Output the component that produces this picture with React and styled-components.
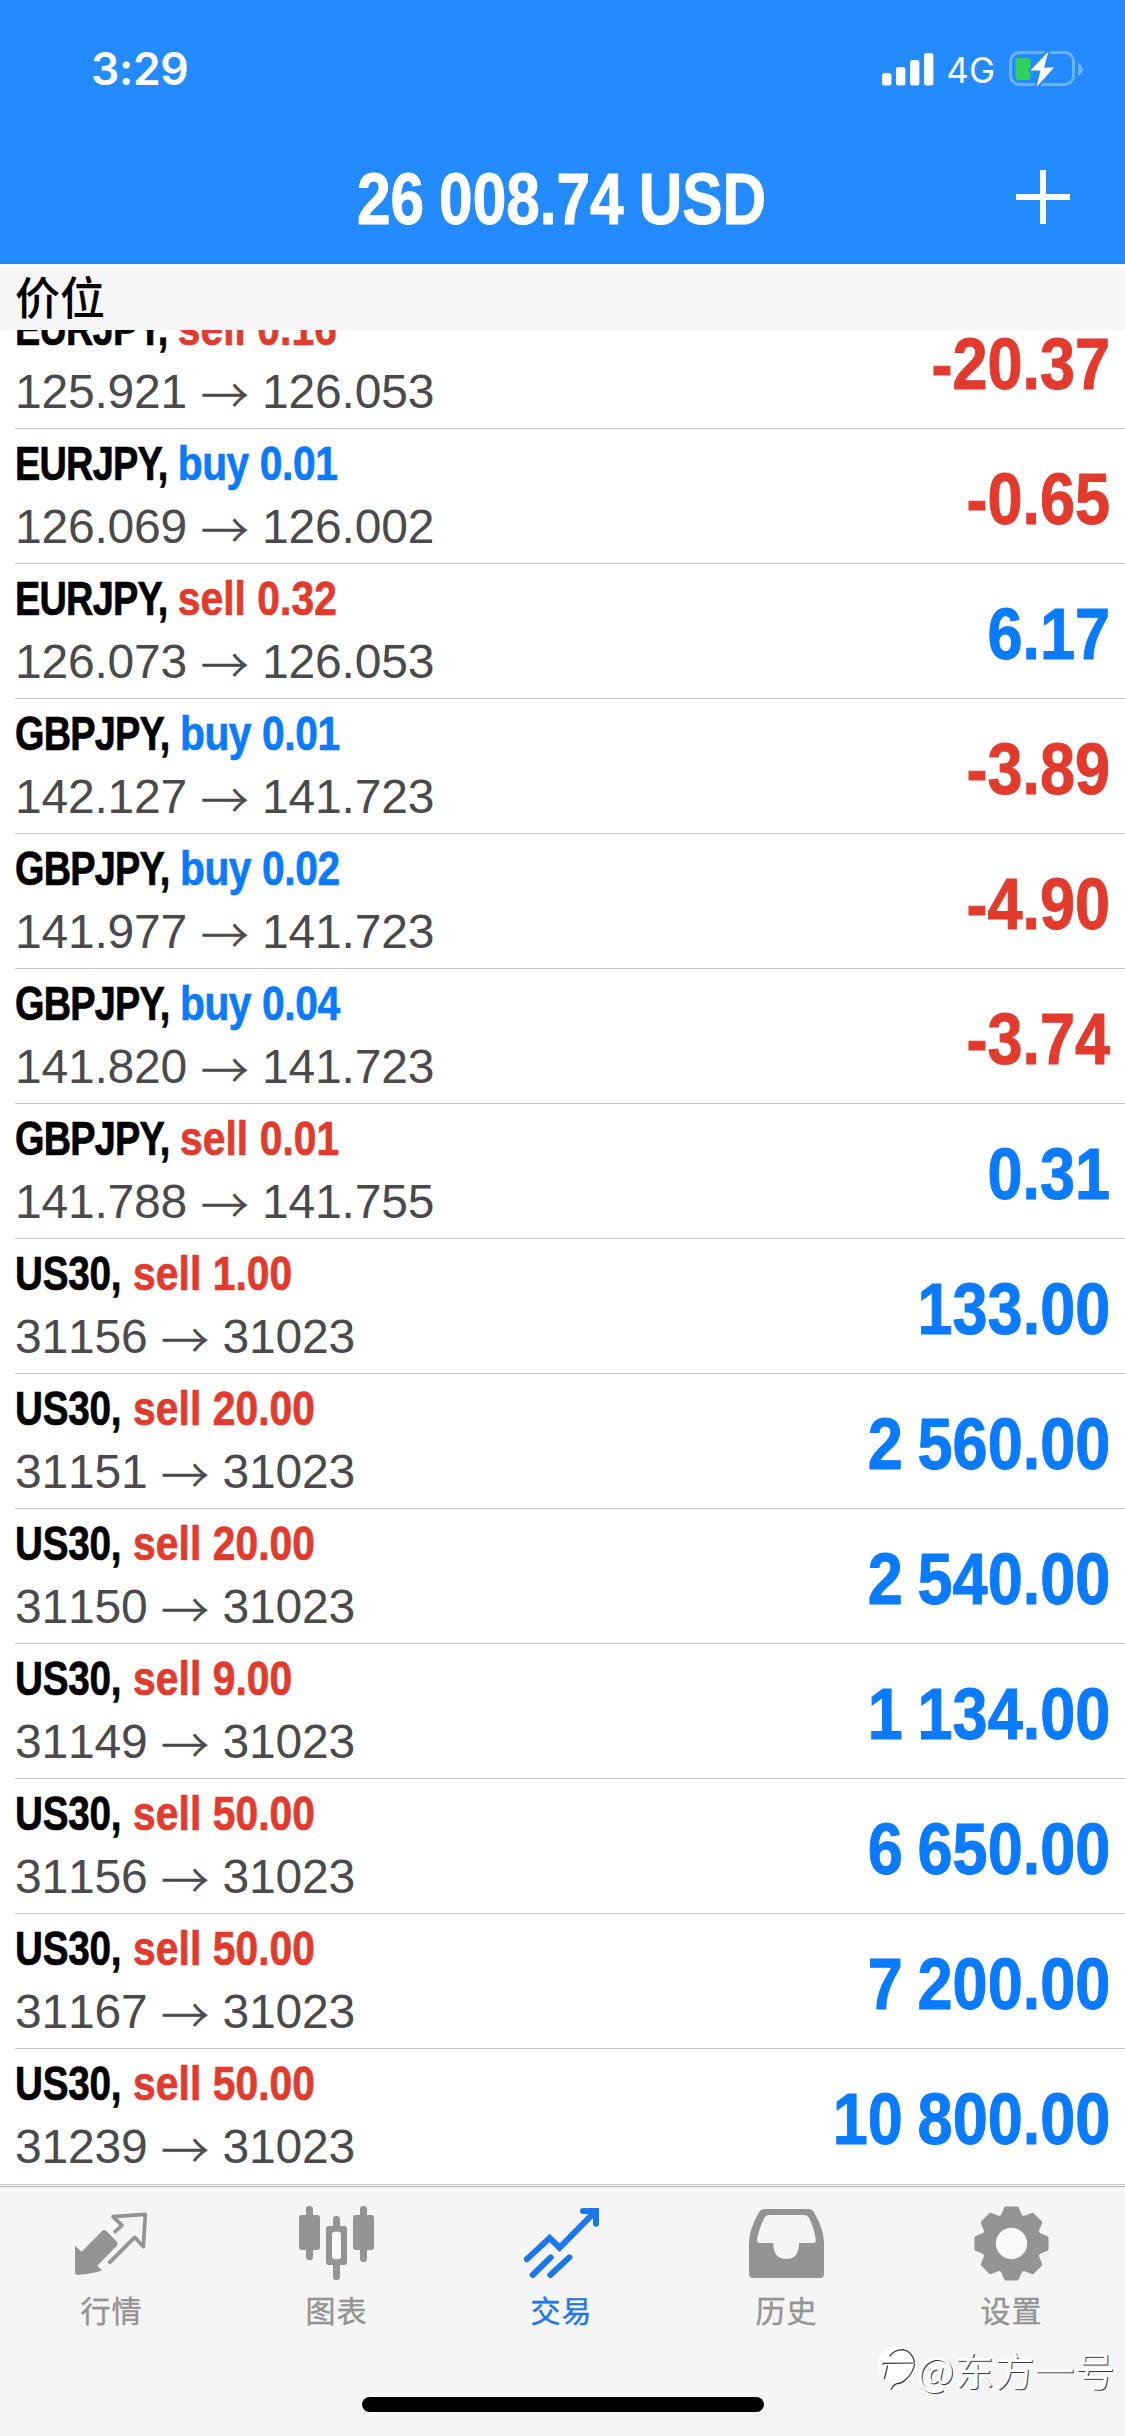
import React from 'react'
import styled, { createGlobalStyle } from 'styled-components'

const GlobalStyle = createGlobalStyle`
  body {
    margin: 0;
    background: #fff;
    font-family: 'Liberation Sans', 'Noto Sans CJK SC', sans-serif;
  }
`

const BLUE = '#0a7aff'
const RED = '#e23b2e'

const Screen = styled.div`
  display: flex;
  flex-direction: column;
  width: 1125px;
  height: 2436px;
  overflow: hidden;
  background: #fff;
`

const Header = styled.header`
  display: flex;
  flex-direction: column;
  flex: none;
  height: 264px;
  box-sizing: border-box;
  background: #248bff;
  border-bottom: 1px solid #1a85fd;
  color: #fff;
`

const StatusBar = styled.div`
  display: flex;
  align-items: center;
  justify-content: space-between;
  height: 138px;
  padding: 0 42px 0 91px;
  box-sizing: border-box;
  font-family: Inter, sans-serif;
`

const Clock = styled.span`
  font-size: 44.5px;
  font-weight: 600;
  letter-spacing: -0.3px;
`

const Indicators = styled.div`
  display: flex;
  align-items: center;
`

const Network = styled.span`
  margin: 0 14px 0 12px;
  font-size: 35px;
  font-weight: 400;
  line-height: 40px;
  padding-top: 2px;
`

const TitleBar = styled.div`
  display: grid;
  grid-template-columns: 110px 1fr 110px;
  align-items: center;
  height: 118px;
`

const Title = styled.h1`
  grid-column: 2;
  margin: 0 2px 0 0;
  padding-top: 4px;
  font-size: 72px;
  line-height: 114px;
  font-weight: 700;
  white-space: nowrap;
  text-align: center;
  word-spacing: -2px;
  -webkit-text-stroke: 1px currentColor;
  transform: scaleX(0.838);
`

const Section = styled.div`
  flex: none;
  height: 66px;
  box-sizing: border-box;
  padding-left: 15px;
  border-top: 6px solid #fafafa;
  background: #f6f6f6;
  font-family: 'Noto Sans CJK SC', sans-serif;
  font-size: 45px;
  font-weight: 500;
  line-height: 52px;
`

const List = styled.div`
  display: flex;
  flex-direction: column;
  justify-content: flex-end;
  flex: none;
  height: 1855px;
  overflow: hidden;
`

const Row = styled.div`
  display: flex;
  flex: none;
  justify-content: space-between;
  height: 135px;
  margin-left: 15px;
  padding-right: 15px;
  box-sizing: border-box;
  border-bottom: 1px solid #c4c4c6;

  &:last-child {
    height: 136px;
    margin-left: 0;
    padding-left: 15px;
  }
`

const Details = styled.div`
  display: flex;
  flex-direction: column;
  padding-top: 6px;
`

const Deal = styled.div`
  display: flex;
  height: 64px;
  font-size: 48.5px;
  font-weight: 700;
  line-height: 56px;
  white-space: pre;
  color: #000;
  -webkit-text-stroke: 0.7px currentColor;
  transform: scaleX(0.84);
  transform-origin: 0 50%;
`

// long tickers are squeezed a bit more than the short ones
const Ticker = styled.span`
  margin-right: ${({ $tight }) => ($tight ? '-14px' : '-6px')};
  letter-spacing: ${({ $tight }) => ($tight ? '-1px' : '-0.3px')};
  transform: scaleX(${({ $tight }) => ($tight ? 0.93 : 0.95)});
  transform-origin: 0 50%;
`

const Side = styled.span`
  color: ${({ $sell }) => ($sell ? RED : BLUE)};
  letter-spacing: ${({ $sell }) => ($sell ? '0.1px' : '-0.5px')};
`

const Prices = styled.div`
  display: flex;
  font-size: 48px;
  font-kerning: none;
  letter-spacing: -0.2px;
  line-height: 56px;
  color: #4a4a4d;
`

const Arrow = styled.span`
  display: flex;
  justify-content: center;
  width: 75px;
  font-family: 'Noto Sans CJK SC', sans-serif;
  font-weight: 300;
  -webkit-text-stroke: 0.5px currentColor;
`

const Profit = styled.div`
  padding-top: 30px;
  font-size: 72px;
  font-weight: 700;
  line-height: 80px;
  white-space: nowrap;
  word-spacing: -3px;
  color: ${({ $loss }) => ($loss ? RED : BLUE)};
  -webkit-text-stroke: 1px currentColor;
  transform: scaleX(0.875);
  transform-origin: 100% 50%;
`

const Footer = styled.footer`
  position: relative;
  display: flex;
  flex-direction: column;
  align-items: center;
  flex: 1;
  margin-top: 1px;
  border-top: 1px solid #b2b2b2;
  background: #f5f5f5;
`

const Tabs = styled.nav`
  display: grid;
  grid-template-columns: repeat(5, 225px);
  width: 1127px;
  height: 206px;
`

const Tab = styled.div`
  display: flex;
  flex-direction: column;
  align-items: center;
  padding-top: 19px;
  color: ${({ $active }) => ($active ? '#1c77ea' : '#949494')};
`

const TabLabel = styled.span`
  margin-top: 6px;
  font-family: 'Noto Sans CJK SC', sans-serif;
  font-size: 30px;
  line-height: 44px;
  letter-spacing: 1px;
  -webkit-text-stroke: 0.4px currentColor;
`

const HomeIndicator = styled.div`
  width: 402px;
  height: 15px;
  margin-top: 4px;
  border-radius: 8px;
  background: #000;
`

const Watermark = styled.div`
  position: absolute;
  right: 10px;
  bottom: 37px;
  display: flex;
  align-items: center;
  font-family: 'Noto Sans CJK SC', sans-serif;
  font-size: 39.5px;
  font-weight: 400;
  line-height: 60px;
  color: #fff;
  text-shadow: 1px 1px 0.5px #3a3a3a;
`

const Handle = styled.span`
  margin-left: -3px;
  letter-spacing: 0.6px;
`

const Signal = () => (
  <svg width="52" height="36" viewBox="0 0 52 36" fill="#fff">
    <rect x="0" y="22" width="9.4" height="12.5" rx="2.5" />
    <rect x="14" y="16" width="9.4" height="18.5" rx="2.5" />
    <rect x="28" y="9" width="9.4" height="25.5" rx="2.5" />
    <rect x="42" y="2" width="9.4" height="32.5" rx="2.5" />
  </svg>
)

const Battery = () => (
  <svg width="74" height="38" viewBox="0 0 74 38">
    <rect x="1.5" y="2.5" width="63" height="32" rx="9" fill="none" stroke="#6ab2ff" strokeWidth="3" />
    <path d="M69 13q4.500 2 4.500 6.500t-4.500 6.500z" fill="#6ab2ff" />
    <rect x="6.500" y="8" width="15" height="22" rx="3" fill="#30d158" />
    <path
      d="M39.500 1.500 21.500 20.500h10l-4 16.500 17.500-19.500h-10z"
      fill="#fff"
      stroke="#248bff"
      strokeWidth="4"
      strokeLinejoin="round"
      paintOrder="stroke"
    />
  </svg>
)

const Plus = () => (
  <svg width="56" height="56" viewBox="0 0 56 56" stroke="#fff" strokeWidth="6">
    <path d="M28 1v54M1 28h54" />
  </svg>
)

const Bubble = () => (
  <svg width="43" height="50" viewBox="0 0 129 150" fill="none" stroke="#333" strokeWidth="3.500">
    <circle cx="58" cy="62" r="56" fill="#fff" stroke="none" />
    <path d="M38 37Q52 17 78 17 105 22 113 55M18 62V58L113 57M32 65 22 105M113 60Q108 88 85 108 75 118 60 119 50 122 42 137" />
  </svg>
)

const Icon = ({ children }) => (
  <svg width="75" height="75" viewBox="0 0 225 225" fill="currentColor">
    {children}
  </svg>
)

const QuotesIcon = () => (
  <Icon>
    <path
      d="M120 80 144 58 117 32 214 25 208 122 182 94 104 172"
      fill="none"
      stroke="currentColor"
      strokeWidth="11"
      strokeLinejoin="round"
    />
    <path d="M3 119 23 137 82 77Q90 68 98 76L126 104Q135 112 127 121L70 179 84 193Q70 201 13 207Q3 207 3 198Z" />
  </Icon>
)

const ChartIcon = () => (
  <Icon>
    <rect x="21" y="0" width="21" height="162" rx="10" />
    <rect x="0" y="27" width="63" height="105" rx="8" />
    <rect x="102" y="30" width="21" height="192" rx="10" />
    <rect x="81" y="60" width="63" height="117" rx="8" />
    <rect x="99" y="77" width="27" height="83" rx="9" fill="#fafafa" />
    <rect x="183" y="0" width="21" height="168" rx="10" />
    <rect x="162" y="27" width="63" height="105" rx="8" />
  </Icon>
)

const TradeIcon = () => (
  <Icon>
    <g fill="none" stroke="currentColor" strokeWidth="18" strokeLinecap="round">
      <path d="M8 160 77 96 107 125 211 19" />
      <path d="M177 15H216V53" />
      <path d="M26 207 80 154M79 207 136 154" />
    </g>
    <path d="M190 18H222V46Z" />
  </Icon>
)

const HistoryIcon = () => (
  <Icon>
    <path
      fillRule="evenodd"
      d="M48 9H178Q190 9 196 20Q225 72 225 110V204Q225 216 213 216H12Q0 216 0 204V110Q0 72 29 20Q36 9 48 9Z
        M60 27Q50 27 46 35Q31 65 24 98Q23 111 33 111H73Q73 159 112 159Q150 159 150 111H192Q202 111 200 98Q195 65 180 35Q175 27 166 27Z"
    />
  </Icon>
)

const polar = (deg, r) => {
  const a = (deg * Math.PI) / 180
  return `${(112.5 + r * Math.sin(a)).toFixed(1)} ${(112.5 - r * Math.cos(a)).toFixed(1)}`
}

// eight teeth, 45deg apart
const gearPath =
  [0, 45, 90, 135, 180, 225, 270, 315]
    .map(
      (a, i) =>
        `${i ? 'L' : 'M'}${polar(a - 9, 107)}L${polar(a + 9, 107)}L${polar(a + 16, 90)}Q${polar(a + 22.5, 79)} ${polar(a + 29, 90)}`
    )
    .join('') + 'Z'

const SettingsIcon = () => (
  <Icon>
    <path d={gearPath} stroke="currentColor" strokeWidth="11" strokeLinejoin="round" />
    <circle cx="112.5" cy="112.5" r="47" fill="#f9f9f9" />
  </Icon>
)

const deals = [
  ['EURJPY', 'sell', '0.16', '125.921', '126.053', '-20.37'],
  ['EURJPY', 'buy', '0.01', '126.069', '126.002', '-0.65'],
  ['EURJPY', 'sell', '0.32', '126.073', '126.053', '6.17'],
  ['GBPJPY', 'buy', '0.01', '142.127', '141.723', '-3.89'],
  ['GBPJPY', 'buy', '0.02', '141.977', '141.723', '-4.90'],
  ['GBPJPY', 'buy', '0.04', '141.820', '141.723', '-3.74'],
  ['GBPJPY', 'sell', '0.01', '141.788', '141.755', '0.31'],
  ['US30', 'sell', '1.00', '31156', '31023', '133.00'],
  ['US30', 'sell', '20.00', '31151', '31023', '2 560.00'],
  ['US30', 'sell', '20.00', '31150', '31023', '2 540.00'],
  ['US30', 'sell', '9.00', '31149', '31023', '1 134.00'],
  ['US30', 'sell', '50.00', '31156', '31023', '6 650.00'],
  ['US30', 'sell', '50.00', '31167', '31023', '7 200.00'],
  ['US30', 'sell', '50.00', '31239', '31023', '10 800.00'],
]

const tabs = [
  { label: '行情', icon: QuotesIcon },
  { label: '图表', icon: ChartIcon },
  { label: '交易', icon: TradeIcon, active: true },
  { label: '历史', icon: HistoryIcon },
  { label: '设置', icon: SettingsIcon },
]

export default function App() {
  return (
    <Screen>
      <GlobalStyle />
      <Header>
        <StatusBar>
          <Clock>3:29</Clock>
          <Indicators>
            <Signal />
            <Network>4G</Network>
            <Battery />
          </Indicators>
        </StatusBar>
        <TitleBar>
          <Title>26 008.74 USD</Title>
          <Plus />
        </TitleBar>
      </Header>
      <Section>价位</Section>
      <List>
        {deals.map(([symbol, side, volume, open, current, profit], i) => (
          <Row key={i}>
            <Details>
              <Deal>
                <Ticker $tight={symbol.length > 4}>{symbol}, </Ticker>
                <Side $sell={side === 'sell'}>{side} {volume}</Side>
              </Deal>
              <Prices>
                {open}
                <Arrow>→</Arrow>
                {current}
              </Prices>
            </Details>
            <Profit $loss={profit.startsWith('-')}>{profit}</Profit>
          </Row>
        ))}
      </List>
      <Footer>
        <Tabs>
          {tabs.map(({ label, icon: TabIcon, active }) => (
            <Tab key={label} $active={active}>
              <TabIcon />
              <TabLabel>{label}</TabLabel>
            </Tab>
          ))}
        </Tabs>
        <HomeIndicator />
        <Watermark>
          <Bubble />
          <Handle>@东方一号</Handle>
        </Watermark>
      </Footer>
    </Screen>
  )
}
